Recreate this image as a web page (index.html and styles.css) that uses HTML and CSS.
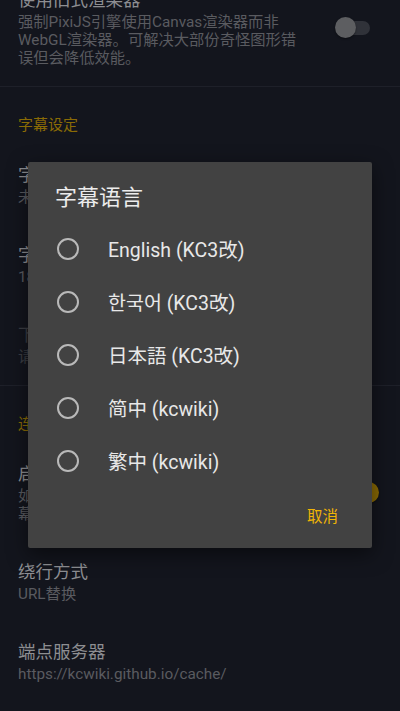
FILE: index.html
```html
<!DOCTYPE html>
<html lang="zh-CN">
<head>
<meta charset="utf-8">
<title>字幕语言</title>
<link rel="stylesheet" href="styles.css">
</head>
<body>
<div class="screen">
  <div class="list">
    <div class="row first">
      <div class="texts">
        <div class="title">使用旧式渲染器</div>
        <div class="sub">强制PixiJS引擎使用Canvas渲染器而非WebGL渲染器。可解决大部份奇怪图形错误但会降低效能。</div>
      </div>
      <div class="switch">
        <span class="track"></span>
        <span class="thumb"></span>
      </div>
    </div>
    <div class="divider"></div>

    <div class="category">字幕设定</div>
    <div class="row">
      <div class="texts">
        <div class="title">字幕语言</div>
        <div class="sub">未设定</div>
      </div>
    </div>
    <div class="row">
      <div class="texts">
        <div class="title">字幕字体大小</div>
        <div class="sub">18</div>
      </div>
    </div>
    <div class="row disabled">
      <div class="texts">
        <div class="title">下载字幕数据</div>
        <div class="sub">请先选择字幕语言</div>
      </div>
    </div>
    <div class="divider"></div>

    <div class="category">连接设定</div>
    <div class="row">
      <div class="texts">
        <div class="title">启用绕行连接</div>
        <div class="sub">如无法正常连接游戏服务器，可尝试<br>幕后绕行功能以改善连接状况</div>
      </div>
      <div class="switch on">
        <span class="track"></span>
        <span class="thumb"></span>
      </div>
    </div>
    <div class="row">
      <div class="texts">
        <div class="title">绕行方式</div>
        <div class="sub">URL替换</div>
      </div>
    </div>
    <div class="row">
      <div class="texts">
        <div class="title">端点服务器</div>
        <div class="sub">https://kcwiki.github.io/cache/</div>
      </div>
    </div>
  </div>

  <div class="dialog">
    <div class="dialog-title">字幕语言</div>
    <div class="options">
      <div class="option"><span class="radio"></span><span class="label">English (KC3改)</span></div>
      <div class="option"><span class="radio"></span><span class="label" lang="ko">한국어 (KC3改)</span></div>
      <div class="option"><span class="radio"></span><span class="label" lang="ja">日本語 (KC3改)</span></div>
      <div class="option"><span class="radio"></span><span class="label">简中 (kcwiki)</span></div>
      <div class="option"><span class="radio"></span><span class="label" lang="zh-TW">繁中 (kcwiki)</span></div>
    </div>
    <div class="actions">
      <span class="btn">取消</span>
    </div>
  </div>
</div>
</body>
</html>
```

FILE: styles.css
```css
* { box-sizing: border-box; }

html, body {
  margin: 0;
  padding: 0;
  background: #13151d;
}

body {
  font-family: "Roboto", "Noto Sans CJK SC", "Noto Sans CJK KR", "Noto Sans CJK JP", sans-serif;
}

[lang="ko"] { font-family: "Roboto", "Noto Sans CJK KR", sans-serif; }
[lang="ja"] { font-family: "Roboto", "Noto Sans CJK JP", sans-serif; }
[lang="zh-TW"] { font-family: "Roboto", "Noto Sans CJK TC", sans-serif; }

.screen {
  position: relative;
  width: 400px;
  height: 711px;
  overflow: hidden;
  background: #13151d;
}

.list {
  margin-top: -30px;
  display: flex;
  flex-direction: column;
}

.row {
  display: flex;
  align-items: center;
  gap: 36px;
  padding: 19px 21px 19px 18px;
}

.texts {
  flex: 1;
  min-width: 0;
}

.title {
  font-size: 17.5px;
  line-height: 22px;
  color: #8d8e92;
}

.sub {
  margin-top: 2px;
  font-size: 15.3px;
  line-height: 18px;
  color: #5a5b60;
}

.row.disabled .title,
.row.disabled .sub {
  color: #3b3d43;
}

.divider {
  height: 1px;
  background: #1e2029;
}

.category {
  padding: 28px 18px 10px;
  font-size: 15px;
  line-height: 20px;
  color: #8a6b05;
}

.switch {
  position: relative;
  flex: none;
  width: 44px;
  height: 22px;
}

.track {
  position: absolute;
  left: 4px;
  top: 4px;
  width: 31px;
  height: 14px;
  border-radius: 7px;
  background: #303239;
}

.thumb {
  position: absolute;
  left: 0;
  top: 0;
  width: 21px;
  height: 21px;
  border-radius: 50%;
  background: #5d5e61;
  box-shadow: 0 1px 2px rgba(0, 0, 0, 0.4);
}

.switch.on .track { background: #4a3a05; left: 10px; }
.switch.on .thumb { left: 23px; background: #8a6a04; }

.dialog {
  position: absolute;
  left: 28px;
  top: 162px;
  width: 344px;
  height: 386px;
  background: #424242;
  border-radius: 2px;
  box-shadow: 0 6px 20px rgba(0, 0, 0, 0.5);
  padding-top: 22px;
  display: flex;
  flex-direction: column;
}

.dialog-title {
  padding-left: 27px;
  font-size: 22px;
  line-height: 28px;
  color: #ececec;
}

.options {
  margin-top: 10px;
  display: flex;
  flex-direction: column;
}

.option {
  height: 53px;
  display: flex;
  align-items: center;
  padding-left: 29px;
}

.radio {
  flex: none;
  width: 22px;
  height: 22px;
  border: 2px solid #b9b9b9;
  border-radius: 50%;
}

.label {
  margin-left: 29px;
  font-size: 19.5px;
  color: #e8e8e8;
}

.actions {
  margin-top: auto;
  display: flex;
  justify-content: flex-end;
  padding: 0 26px 13px 0;
}

.btn {
  padding: 0 8px;
  height: 36px;
  line-height: 36px;
  font-size: 15.5px;
  color: #f0b505;
}
```
